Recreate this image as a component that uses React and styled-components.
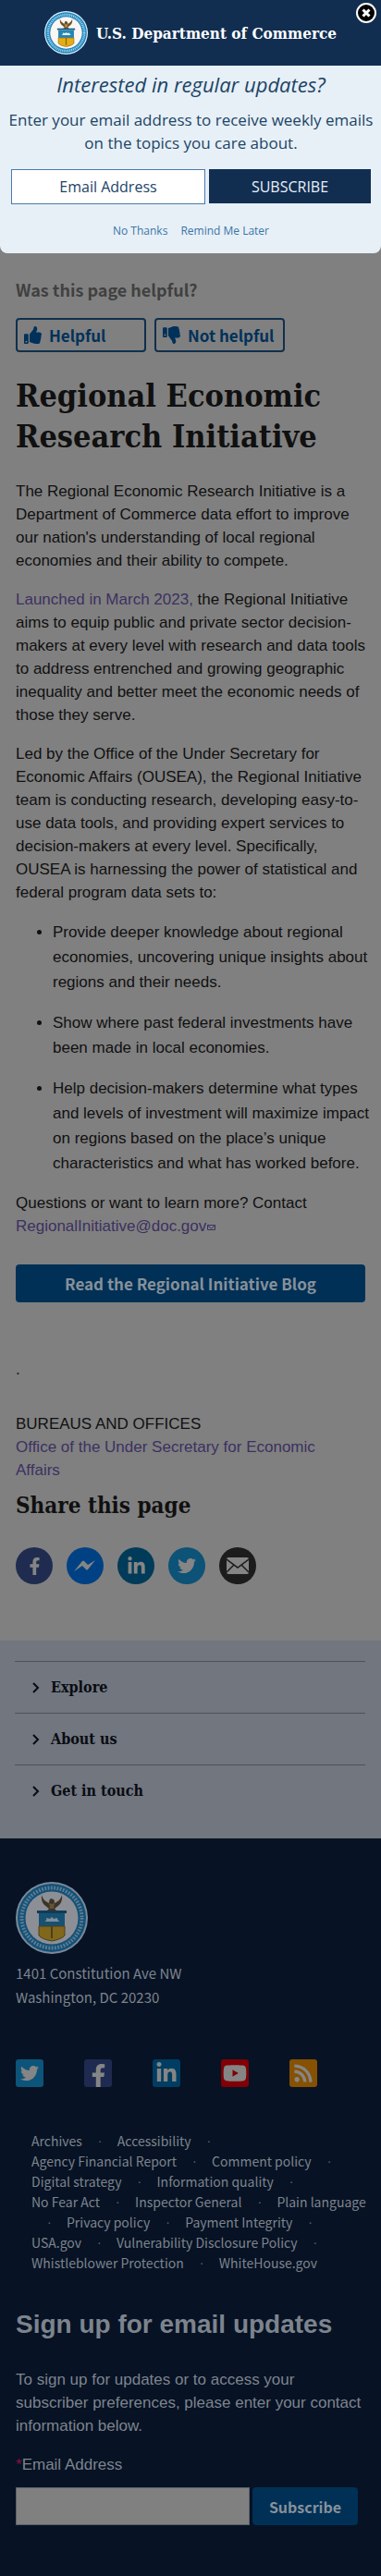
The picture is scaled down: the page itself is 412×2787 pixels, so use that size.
import React from "react";
import styled, { createGlobalStyle } from "styled-components";
import { FaThumbsUp, FaThumbsDown, FaFacebookF, FaLinkedinIn, FaTwitter, FaYoutube, FaRss } from "react-icons/fa";

const sans = '"Liberation Sans", Arial, sans-serif';
const open = '"Open Sans", sans-serif';
const source = '"Noto Sans CJK SC", "Noto Sans", sans-serif';
const serif = '"DejaVu Serif Condensed", "DejaVu Serif", serif';

const Global = createGlobalStyle`
  *, *::before, *::after { box-sizing: border-box; }
  body { margin: 0; background: #808080; color: #101010; font: 17px/25px ${sans}; }
  h1, h2, p, ul { margin: 0; padding: 0; }
  a { color: inherit; text-decoration: none; }
  button { cursor: pointer; }
`;

const Page = styled.div`position: relative;`;

const Dialog = styled.section`
  position: absolute;
  inset: 0 0 auto 0;
  background: #e7f0f6;
  color: #1c4467;
  font-family: ${open};
  text-align: center;
  border-radius: 0 0 8px 8px;
  overflow: hidden;
`;
const Brand = styled.header`
  display: flex;
  align-items: center;
  justify-content: center;
  gap: 9px;
  height: 71px;
  background: #112e51;
  color: #fff;
  font: bold 17px/24px ${serif};
`;
const Close = styled.button`
  position: absolute;
  top: 2px;
  right: 4px;
  width: 24px;
  height: 24px;
  padding: 0;
  border: 0;
  background: none;
  svg { display: block; }
`;
const DialogBody = styled.div`
  padding: 4px 11px 15px 12px;
  display: flex;
  flex-direction: column;
`;
const DialogTitle = styled.h2`font: italic 22px/33px ${open}; margin-bottom: 9px;`;
const DialogText = styled.p`font-size: 17px; line-height: 25px; margin: 0 -8px;`;
const DialogForm = styled.form`
  display: grid;
  grid-template-columns: 210fr 175fr;
  gap: 4px;
  margin-top: 16px;
`;
const DialogInput = styled.input`
  min-width: 0;
  height: 38px;
  border: 1px solid #4a7aac;
  background: #fff;
  text-align: center;
  font: 16px/24px ${open};
  color: #1c4467;
  border-radius: 0;
  &::placeholder { color: #1c4467; opacity: 1; }
`;
const DialogSubmit = styled.button`
  height: 37px;
  border: 0;
  background: #112e51;
  color: #e7f0f8;
  font: 16px/24px ${open};
`;
const DialogLinks = styled.nav`
  display: flex;
  justify-content: center;
  gap: 14px;
  margin-top: 20px;
  font-size: 12px;
  line-height: 18px;
  color: #3a75a8;
`;

const Main = styled.main`padding: 300px 17px 61px;`;
const Question = styled.h2`&& { font: bold 18px/26px ${source}; color: #404040; }`;
const Votes = styled.div`display: flex; gap: 9px; margin-top: 18px;`;
const Vote = styled.button`
  display: flex;
  align-items: center;
  gap: 8px;
  width: 141px;
  height: 37px;
  padding: 0 7px;
  border: 2px solid #10304c;
  border-radius: 4px;
  background: none;
  color: #00315a;
  font: bold 17px/24px ${source};
  white-space: nowrap;
  svg { flex: none; }
`;
const Title = styled.h1`&& { font: bold 34px/44px ${serif}; margin: 25px 0; }`;
const Prose = styled.div`margin-right: -6px;`;
const Para = styled.p`margin-bottom: 17px;`;
const Visited = styled.a`&& { color: #3c3160; }`;
const Mail = styled.svg`margin-left: 1px;`;
const List = styled.ul`
  && { padding-left: 40px; margin-bottom: 17px; }
  line-height: 27px;
  li + li { margin-top: 17px; }
`;
const BlogButton = styled.a`
  display: block;
  margin-top: 29px;
  padding: 8px;
  border-radius: 4px;
  && { color: #87919a; }
  background: #003056;
  text-align: center;
  font: bold 17px/25px ${source};
`;
const Dot = styled.p`&& { margin: 60px 0 34px; }`;
const Bureaus = styled.section`padding-right: 17px;`;
const Share = styled.h2`&& { font: bold 24px/32px ${serif}; margin-top: 10px; }`;
const ShareRow = styled.div`display: flex; gap: 15px; margin-top: 29px;`;
const Round = styled.a`
  display: flex;
  align-items: center;
  justify-content: center;
  width: 40px;
  height: 40px;
  border-radius: 50%;
  background: ${(p) => p.$bg};
  && { color: #858585; }
`;

const Menu = styled.nav`background: #71767f; padding: 22px 17px 24px 16px;`;
const MenuItem = styled.button`
  display: flex;
  align-items: center;
  gap: 12px;
  width: 100%;
  height: 56px;
  padding: 0 19px;
  border: 0;
  border-top: 1px solid #4e535b;
  background: none;
  color: #090c12;
  font: bold 16px/24px ${serif};
`;

const Footer = styled.footer`
  background: #071224;
  color: #7d848d;
  padding: 47px 17px 56px;
`;
const Address = styled.address`font: 15px/26px ${source}; margin-top: 8px;`;
const Socials = styled.div`display: flex; gap: 44px; margin-top: 54px;`;
const Square = styled.a`
  display: flex;
  align-items: ${(p) => (p.$low ? "flex-end" : "center")};
  justify-content: center;
  width: 30px;
  height: 30px;
  border-radius: 3px;
  background: ${(p) => p.$bg};
  && { color: #858585; }
`;
const Legal = styled.nav`margin: 47px 0 37px; padding-left: 17px;`;
const LegalRow = styled.div`
  display: flex;
  height: 22px;
  font: 14px/22px ${source};
  white-space: nowrap;
`;
const Bullet = styled.span`
  width: 4px;
  margin: 0 17px;
  font-family: ${sans};
  text-align: center;
  color: #5a636e;
`;
const SignTitle = styled.h2`&& { font: bold 28px/38px ${sans}; margin-bottom: 28px; }`;
const Label = styled.label`
  display: block;
  margin-top: 17px;
  span { color: #8a1040; }
`;
const SignForm = styled.form`display: flex; gap: 3px; margin-top: 12px;`;
const SignInput = styled.input`
  width: 253px;
  min-width: 0;
  height: 41px;
  border: 1px solid #5b616b;
  border-radius: 0;
  background: #808080;
`;
const SignButton = styled.button`
  width: 114px;
  height: 41px;
  border: 0;
  border-radius: 4px;
  background: #003056;
  color: #87919a;
  font: bold 16px/24px ${source};
`;

const SealSvg = styled.svg`
  display: block;
  flex: none;
  opacity: ${(p) => (p.$dim ? 0.55 : 1)};
`;

function Seal({ size, dim }) {
  return (
    <SealSvg width={size} height={size} viewBox="0 0 78 78" role="img" aria-label="Department of Commerce seal" $dim={dim}>
      <circle cx="39" cy="39" r="39" fill="#d9edf8" />
      <circle cx="39" cy="39" r="37" fill="#1f86bd" />
      <circle cx="39" cy="39" r="32.5" fill="none" stroke="#a5d5ec" strokeWidth="4" strokeDasharray="1.8 1.5" />
      <circle cx="39" cy="39" r="28.5" fill="#fbf6f4" />
      <path d="M28 14q1 5 6 8l2 1q0-4 2-5l3 1q1 1 1 4l2-1q5-3 6-8q1 7-3 11l-5 4 3 3H33l3-3-5-4q-4-4-3-11z" fill="#6b5126" />
      <path d="M36 23l3 1 3-1-1 6h-4z" fill="#b08a45" />
      <path d="M23 31h32v3H23z" fill="#1b5e80" />
      <path d="M25 34h28v14H25z" fill="#2385b3" />
      <path d="M25 48h28v10q-3 4-14 6q-11-2-14-6z" fill="#e3ae14" stroke="#86651b" />
      <path d="M38 48h2v13h-2z" fill="#86651b" />
      <path d="M31 43q3-1 2-4l4 1 2-2 2 2 4-1q0 3 3 4z" fill="#e5f2f8" />
    </SealSvg>
  );
}

const Chevron = () => (
  <svg width="8" height="12" viewBox="0 0 8 12" fill="none" stroke="currentColor" strokeWidth="2" aria-hidden="true">
    <path d="M1 1l5 5-5 5" />
  </svg>
);

const legalRows = [
  ["Archives", "•", "Accessibility", "•"],
  ["Agency Financial Report", "•", "Comment policy", "•"],
  ["Digital strategy", "•", "Information quality", "•"],
  ["No Fear Act", "•", "Inspector General", "•", "Plain language"],
  ["•", "Privacy policy", "•", "Payment Integrity", "•"],
  ["USA.gov", "•", "Vulnerability Disclosure Policy", "•"],
  ["Whistleblower Protection", "•", "WhiteHouse.gov"],
];

export default function App() {
  return (
    <Page>
      <Global />
      <Main>
        <Question>Was this page helpful?</Question>
        <Votes>
          <Vote type="button"><FaThumbsUp size={19} />Helpful</Vote>
          <Vote type="button"><FaThumbsDown size={19} />Not helpful</Vote>
        </Votes>
        <Title>Regional Economic Research Initiative</Title>
        <Prose>
          <Para>The Regional Economic Research Initiative is a Department of Commerce data effort to improve our nation's understanding of local regional economies and their ability to compete.</Para>
          <Para><Visited href="#launch">Launched in March 2023,</Visited> the Regional Initiative aims to equip public and private sector decision-makers at every level with research and data tools to address entrenched and growing geographic inequality and better meet the economic needs of those they serve.</Para>
          <Para>Led by the Office of the Under Secretary for Economic Affairs (OUSEA), the Regional Initiative team is conducting research, developing easy-to-use data tools, and providing expert services to decision-makers at every level. Specifically, OUSEA is harnessing the power of statistical and federal program data sets to:</Para>
          <List>
            <li>Provide deeper knowledge about regional economies, uncovering unique insights about regions and their needs.</li>
            <li>Show where past federal investments have been made in local economies.</li>
            <li>Help decision-makers determine what types and levels of investment will maximize impact on regions based on the place’s unique characteristics and what has worked before.</li>
          </List>
          <p>Questions or want to learn more? Contact{" "}
            <Visited href="#mail">RegionalInitiative@doc.gov<Mail width="9" height="8" viewBox="0 0 9 8" fill="none" stroke="currentColor" aria-hidden="true"><path d="M.5 1.5h8v5h-8zM.5 2l4 3 4-3" /></Mail></Visited>
          </p>
        </Prose>
        <BlogButton href="#blog">Read the Regional Initiative Blog</BlogButton>
        <Dot>.</Dot>
        <Bureaus>
          <p>BUREAUS AND OFFICES</p>
          <p><Visited href="#ousea">Office of the Under Secretary for Economic Affairs</Visited></p>
        </Bureaus>
        <Share>Share this page</Share>
        <ShareRow>
          <Round href="#facebook" aria-label="Facebook" $bg="#1f2c50"><FaFacebookF size={19} /></Round>
          <Round href="#messenger" aria-label="Messenger" $bg="#004184">
            <svg width="24" height="14" viewBox="0 0 24 14" fill="currentColor"><path d="M0 13L9 2q1-1 2 0l4 4 8-5-8 10q-1 1-2 0L9 7z" /></svg>
          </Round>
          <Round href="#linkedin" aria-label="LinkedIn" $bg="#003b59"><FaLinkedinIn size={21} /></Round>
          <Round href="#twitter" aria-label="Twitter" $bg="#0d5277"><FaTwitter size={20} /></Round>
          <Round href="#email" aria-label="Email" $bg="#1c1c1c">
            <svg width="24" height="18" viewBox="0 0 24 18"><rect width="24" height="18" rx="2" fill="currentColor" /><path d="M0 2l12 9L24 2M0 16l8-8M24 16l-8-8" fill="none" stroke="#1c1c1c" strokeWidth="1.5" /></svg>
          </Round>
        </ShareRow>
      </Main>
      <Menu aria-label="Footer sections">
        {["Explore", "About us", "Get in touch"].map((t) => (
          <MenuItem type="button" key={t}><Chevron />{t}</MenuItem>
        ))}
      </Menu>
      <Footer>
        <Seal size={78} dim />
        <Address>1401 Constitution Ave NW<br />Washington, DC 20230</Address>
        <Socials>
          <Square href="#twitter" aria-label="Twitter" $bg="#0d547b"><FaTwitter size={20} /></Square>
          <Square href="#facebook" aria-label="Facebook" $bg="#1f2a50" $low><FaFacebookF size={25} /></Square>
          <Square href="#linkedin" aria-label="LinkedIn" $bg="#003d62"><FaLinkedinIn size={24} /></Square>
          <Square href="#youtube" aria-label="YouTube" $bg="#800006"><FaYoutube size={26} /></Square>
          <Square href="#rss" aria-label="RSS" $bg="#865102"><FaRss size={22} /></Square>
        </Socials>
        <Legal aria-label="Legal">
          {legalRows.map((row, i) => (
            <LegalRow key={i}>
              {row.map((t, j) => (t === "•" ? <Bullet key={j}>·</Bullet> : <a key={j} href="#legal">{t}</a>))}
            </LegalRow>
          ))}
        </Legal>
        <SignTitle>Sign up for email updates</SignTitle>
        <p>To sign up for updates or to access your subscriber preferences, please enter your contact information below.</p>
        <Label htmlFor="signup-email"><span>*</span>Email Address</Label>
        <SignForm>
          <SignInput id="signup-email" type="email" />
          <SignButton type="button">Subscribe</SignButton>
        </SignForm>
      </Footer>
      <Dialog role="dialog" aria-labelledby="updates-title">
        <Brand><Seal size={47} />U.S. Department of Commerce</Brand>
        <DialogBody>
          <DialogTitle id="updates-title">Interested in regular updates?</DialogTitle>
          <DialogText>Enter your email address to receive weekly emails on the topics you care about.</DialogText>
          <DialogForm>
            <DialogInput type="email" aria-label="Email Address" placeholder="Email Address" />
            <DialogSubmit type="button">SUBSCRIBE</DialogSubmit>
          </DialogForm>
          <DialogLinks><a href="#no">No Thanks</a><a href="#later">Remind Me Later</a></DialogLinks>
        </DialogBody>
        <Close type="button" aria-label="Close">
          <svg width="24" height="24" viewBox="0 0 24 24"><circle cx="12" cy="12" r="10" fill="#000" stroke="#fff" strokeWidth="2" /><path d="M8.500 8.500l7 7M15.500 8.500l-7 7" stroke="#fff" strokeWidth="3" /></svg>
        </Close>
      </Dialog>
    </Page>
  );
}
